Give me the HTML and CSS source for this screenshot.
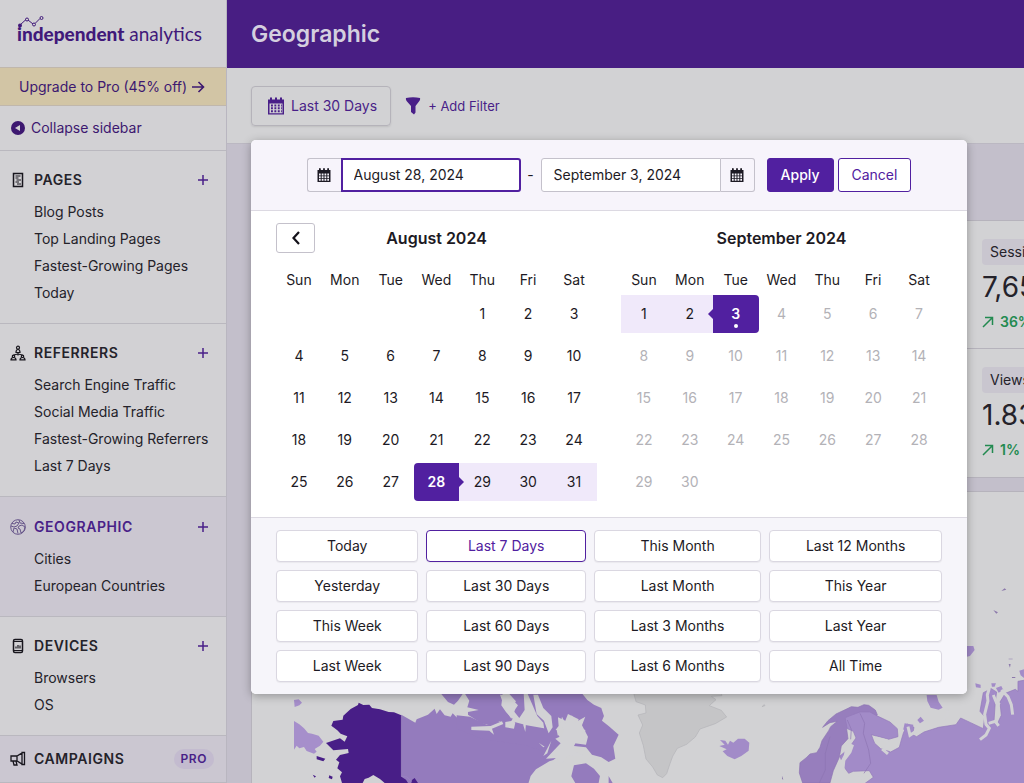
FILE: index.html
```html
<!DOCTYPE html>
<html lang="en">
<head>
<meta charset="utf-8">
<meta name="viewport" content="width=device-width, initial-scale=1">
<title>Geographic</title>
<link rel="stylesheet" href="styles.css">
</head>
<body>
<svg class="sprite" aria-hidden="true">
  <symbol id="calendar" viewBox="0 0 18 18">
    <path fill="currentColor" d="M1 2.5h2V1.2Q3 .2 4 .2t1 1v1.3h3V1.2q0-1 1-1t1 1v1.3h3V1.2q0-1 1-1t1 1v1.3h2V17.6H1zM2.5 6.500V16.200h13V6.500z"/>
    <path stroke="currentColor" stroke-width="1.900" stroke-dasharray="1.900 1.500" d="M4 8.500h11M4 11.300h11M4 14.200h11"/>
  </symbol>
  <symbol id="calendar-solid" viewBox="0 0 14 14">
    <path fill="currentColor" d="M.5 2H2V1q0-.9.9-.9t.9.900V2h2.300V1q0-.9.900-.9t.900.900V2h2.300V1q0-.9.900-.9t.900.900V2h1.500v12H.5z"/>
    <path fill="#f7f4fb" d="M2 5.500h1.700v2H2zM4.700 5.500h1.800v2H4.700zM7.500 5.500h1.800v2H7.500zM10.300 5.500H12v2h-1.700zM2 8.300h1.700v2H2zM4.700 8.300h1.800v2H4.700zM7.500 8.300h1.800v2H7.500zM10.300 8.300H12v2h-1.700zM2 11h1.700v1.800H2zM4.700 11h1.800v1.800H4.700zM7.500 11h1.800v1.800H7.500zM10.300 11H12v1.800h-1.700z"/>
  </symbol>
  <symbol id="plus" viewBox="0 0 12 12"><path d="M6 1v10M1 6h10" stroke="currentColor" stroke-width="1.500"/></symbol>
  <symbol id="up" viewBox="0 0 12 12"><path d="M1 11 10.500 1.500M3 1.500h7.500V9" fill="none" stroke="currentColor" stroke-width="1.500"/></symbol>
</svg>
<div class="app">
  <aside class="sidebar">
    <a class="logo" href="#"><b>independent</b> analytics
      <svg class="logo-mark" viewBox="0 0 28 12" aria-hidden="true"><path d="M2 9 8 3.500M10 4l5 4M17 7.500l5-5" stroke="#41197a" fill="none"/><circle cx="2" cy="9.500" r="2" fill="#41197a"/><g fill="none" stroke="#41197a"><circle cx="9" cy="3.500" r="1.500"/><circle cx="16" cy="8.500" r="1.500"/><circle cx="23.500" cy="2" r="1.500"/></g></svg>
    </a>
    <a class="upgrade" href="#">Upgrade to Pro (45% off)
      <svg width="14" height="12" viewBox="0 0 14 12" aria-hidden="true"><path d="M1 6h11.500M7.500 1l5 5-5 5" fill="none" stroke="currentColor" stroke-width="1.600"/></svg>
    </a>
    <button class="collapse" type="button">
      <svg width="14" height="14" viewBox="0 0 14 14" aria-hidden="true"><circle cx="7" cy="7" r="7" fill="currentColor"/><path d="M9 4v6L4 7z" fill="#d2d1d4"/></svg>
      Collapse sidebar
    </button>
    <nav>
      <section class="group">
        <h2><svg class="icon" viewBox="0 0 16 16" aria-hidden="true"><path d="M3.500 1.500h9v13h-9z" fill="none" stroke="currentColor" stroke-width="1.500"/><path d="M5.500 4h5M5.500 6h3M6.500 8H11M5.500 10H9M7 12h4" stroke="currentColor" stroke-width="1.200"/></svg>PAGES<button type="button" aria-label="Add pages report"><svg><use href="#plus"/></svg></button></h2>
        <ul><li><a href="#">Blog Posts</a></li><li><a href="#">Top Landing Pages</a></li><li><a href="#">Fastest-Growing Pages</a></li><li><a href="#">Today</a></li></ul>
      </section>
      <section class="group">
        <h2><svg class="icon" viewBox="0 0 16 16" aria-hidden="true"><g fill="none" stroke="currentColor" stroke-width="1.200"><circle cx="8" cy="2.700" r="1.500"/><path d="M6 7.500q0-3 2-3t2 3zM8 7.500v3M8 9 3.500 10M8 9l4.500 1"/><circle cx="3.500" cy="11.300" r="1.200"/><circle cx="12.500" cy="11.300" r="1.200"/><path d="M1 14.800q0-2.300 2.500-2.300T6 14.800zM10 14.800q0-2.300 2.500-2.300t2.500 2.300z"/></g></svg>REFERRERS<button type="button" aria-label="Add referrers report"><svg><use href="#plus"/></svg></button></h2>
        <ul><li><a href="#">Search Engine Traffic</a></li><li><a href="#">Social Media Traffic</a></li><li><a href="#">Fastest-Growing Referrers</a></li><li><a href="#">Last 7 Days</a></li></ul>
      </section>
      <section class="group active">
        <h2><svg class="icon" viewBox="0 0 16 16" aria-hidden="true"><g fill="none" stroke="#67568a" stroke-width="1"><circle cx="8" cy="8" r="7.300"/><path d="M2 4.500 5 5l1-2 3 1-2 3-3 1-3-1M3 13l1-4 3 1 1 4.500M9 1l1 3 4 .5M9 7l3-1 3 2-1 4-3 2-1-4-2-1z"/></g></svg>GEOGRAPHIC<button type="button" aria-label="Add geographic report"><svg><use href="#plus"/></svg></button></h2>
        <ul><li><a href="#">Cities</a></li><li><a href="#">European Countries</a></li></ul>
      </section>
      <section class="group">
        <h2><svg class="icon" viewBox="0 0 16 16" aria-hidden="true"><rect x="3.500" y="1.500" width="9" height="13" rx="1.500" fill="none" stroke="currentColor" stroke-width="1.500"/><path d="M4 3.500h8M4 12.500h8M6 10.500v-2M8 10.500V7M10 10.500v-3" stroke="currentColor" stroke-width="1.200"/></svg>DEVICES<button type="button" aria-label="Add devices report"><svg><use href="#plus"/></svg></button></h2>
        <ul><li><a href="#">Browsers</a></li><li><a href="#">OS</a></li></ul>
      </section>
      <section class="group locked">
        <h2><svg class="icon" viewBox="0 0 16 16" aria-hidden="true"><path d="M1 5h6l5-3v11L7 10H1zM7 5v5M3 10l1 4h3l-1-4M12 1.500h2.500v12H12z" fill="none" stroke="currentColor" stroke-width="1.300"/></svg>CAMPAIGNS<span class="pro">PRO</span></h2>
      </section>
    </nav>
  </aside>
  <main>
    <header class="title"><h1>Geographic</h1></header>
    <div class="toolbar">
      <button class="range" type="button"><svg width="18" height="18" aria-hidden="true"><use href="#calendar"/></svg>Last 30 Days</button>
      <button class="filter" type="button"><svg width="16" height="18" viewBox="0 0 16 18" aria-hidden="true"><path d="M1 1q7-1.500 14 0 .5 2-1 3.500L10.500 9v6.500L9 17.500 6 15V9L2 4.500Q.500 3 1 1z" fill="currentColor"/></svg>+ Add Filter</button>
      <div class="picker" role="dialog" aria-label="Date range">
        <form class="dates">
          <div class="field"><label for="from" aria-label="Start date"><svg width="14" height="14"><use href="#calendar-solid"/></svg></label><input id="from" class="focused" type="text" value="August 28, 2024"></div>
          <span class="dash">-</span>
          <div class="field end"><input id="to" type="text" value="September 3, 2024"><label for="to" aria-label="End date"><svg width="14" height="14"><use href="#calendar-solid"/></svg></label></div>
          <button class="apply" type="button">Apply</button>
          <button class="cancel" type="button">Cancel</button>
        </form>
        <div class="months">
          <button class="prev" type="button" aria-label="Previous month"><svg width="10" height="14" viewBox="0 0 10 14" aria-hidden="true"><path d="M8 1 2.500 7 8 13" fill="none" stroke="#14121a" stroke-width="2.200"/></svg></button>
          <table>
            <caption>August 2024</caption>
            <thead><tr><th>Sun</th><th>Mon</th><th>Tue</th><th>Wed</th><th>Thu</th><th>Fri</th><th>Sat</th></tr></thead>
            <tbody>
              <tr><td></td><td></td><td></td><td></td><td>1</td><td>2</td><td>3</td></tr>
              <tr><td>4</td><td>5</td><td>6</td><td>7</td><td>8</td><td>9</td><td>10</td></tr>
              <tr><td>11</td><td>12</td><td>13</td><td>14</td><td>15</td><td>16</td><td>17</td></tr>
              <tr><td>18</td><td>19</td><td>20</td><td>21</td><td>22</td><td>23</td><td>24</td></tr>
              <tr><td>25</td><td>26</td><td>27</td><td class="edge first">28</td><td class="between">29</td><td class="between">30</td><td class="between">31</td></tr>
            </tbody>
          </table>
          <table>
            <caption>September 2024</caption>
            <thead><tr><th>Sun</th><th>Mon</th><th>Tue</th><th>Wed</th><th>Thu</th><th>Fri</th><th>Sat</th></tr></thead>
            <tbody class="future">
              <tr><td class="between">1</td><td class="between">2</td><td class="edge last today">3</td><td>4</td><td>5</td><td>6</td><td>7</td></tr>
              <tr><td>8</td><td>9</td><td>10</td><td>11</td><td>12</td><td>13</td><td>14</td></tr>
              <tr><td>15</td><td>16</td><td>17</td><td>18</td><td>19</td><td>20</td><td>21</td></tr>
              <tr><td>22</td><td>23</td><td>24</td><td>25</td><td>26</td><td>27</td><td>28</td></tr>
              <tr><td>29</td><td>30</td><td></td><td></td><td></td><td></td><td></td></tr>
            </tbody>
          </table>
        </div>
        <div class="presets">
          <button type="button">Today</button><button type="button" class="selected">Last 7 Days</button><button type="button">This Month</button><button type="button">Last 12 Months</button>
          <button type="button">Yesterday</button><button type="button">Last 30 Days</button><button type="button">Last Month</button><button type="button">This Year</button>
          <button type="button">This Week</button><button type="button">Last 60 Days</button><button type="button">Last 3 Months</button><button type="button">Last Year</button>
          <button type="button">Last Week</button><button type="button">Last 90 Days</button><button type="button">Last 6 Months</button><button type="button">All Time</button>
        </div>
      </div>
    </div>
    <div class="content">
      <div class="stats">
        <div class="stat"><span class="chip">Sessions</span><strong>7,65</strong><span class="change"><svg width="12" height="12"><use href="#up"/></svg>36%</span></div>
        <div class="stat"><span class="chip">Views</span><strong>1.83</strong><span class="change"><svg width="12" height="12"><use href="#up"/></svg>1%</span></div>
      </div>
      <div class="map">
        <svg viewBox="252 492 772 291" aria-label="World map" role="img">
          <g transform="translate(270 690) scale(.3333)">
            <path fill="#a68fcb" d="M72 30l14-2 10 10-8 8-14 5zM72 93l16 10 14 12 12 14 12 2 20 6 14 18-10 12-16 10 6 8-8 6-22-8-8-12-14 4-8-8-8 12z"/>
            <path fill="#947bbd" d="M394 74l42 24 4-10 34-14 20-18 6 16 10-14 14 18 18 4 6-10 14 14 44 2 6 14-8 12 6 10 36-8 38 2 20-6 24 14 26-2 14-10 4 24 22-12 14 20 14-6 10 18 18-14 16-6 8 14 12 18-8 20-28 22-12 4-40 24-16 20-12 40H394z"/>
            <path fill="#947bbd" d="M514 12h64l-14 20-12 12-18-8zM572 -10h122l4 26-4 30 14 20 20 20-8 14-32-6-18 14-36-8-40-26 0-8 32-6-34-8 6-20zM700 -10h60l4 70-16 24-24-30 14-20-22-24zM768 0h160l24 30 20 14 22 10 8 24-6 14 20 16 30 26-16 34 6 38-20 10-22-14-28-8-18-22-36-4 6-12 26-12 2-24-26-8 6-24-32-16-8 20-22-10 2 26-16 20-12-6 4 34-18-32-4-26-18-20z"/>
            <path fill="#947bbd" d="M560 76l40 4 50 24 60-14 60 16 60 10 30 4 6 30-40 36-60-20-130-20-76-30z"/>
            <path fill="#947bbd" d="M912 226l36-6 24 16 18 22-4 21h-70l-12-20zM1016 258l12 21h-12z"/>
            <path fill="#d2d2d5" d="M690 14l18 50 16 22 12-28 8-12-30-30zM790 14h14l16 40 24 24 4 34-12 18-14-38-22-20zM706 96l24-4 6 6-4 18-26-4zM604 110l58-2 34-14 4 8-34 14 6 18-14-12-54-2zM762 80l6 20-2 26-6-20zM876 80l10 20 20-24 8 22 32-18-10 26 18 34-6 24-34-4-6 20 42 22-58-6-14 24-18-16-32 2 44-46-16-14 18-8 8-16-10-20zM844 152l-12 38-12 8zM806 158l18 12-4 2z"/>
            <path fill="#481e87" d="M266 38l14 7 18-1 8 10 24 4 26 8 16 1 22 9v184l14 9 6 10h-70l-14-12-20-12-14 8-12 4-6 12h-62l-6-20 6-12-14-12 6-18-10-8 12-14 26-6-2-12-44 4-22-22 42-14 14 10 8-16-20-8-10-10-18-14 6-14 28-4 2-12 22-20 22-12zM140 198l26 8-6 8-20-6zM128 254l10 5-4 4zM178 256l10 4-2 8-10-4zM426 270l8-6 10 15h-20z"/>
            <path fill="none" stroke="#a68fcb" d="M394 75v184l16 2 16 14"/>
          </g>
          <g transform="translate(630 580) scale(.3333)">
            <path fill="#c5c5c7" stroke="#b4b4b8" stroke-width="2" d="M10 335l8 30 28 10 2 24-24 6 14 30-10 24 12 38 8 40 20 24 14 24 16 8 12-12 10-30 8-22 14-24 28-12 26-22 14-24 46-16 34-20-16-20-36-14 20-18-14-10 32-2-4-12zM396 380l7-6 2 3z"/>
            <path fill="#a28bc8" d="M270 480l16 2 8 12 6-12 10 6 14-12 20 0 14 12-2 24-22 16-20 10-22-10-14-14 12-6-22-10 16-4z"/>
            <path fill="#977ebd" stroke="#8c74b2" stroke-width="2" d="M510 548l18-14 12-12 20-4 10-16 6-20 20-30 6-12 20-16-22 4-22 14 16-20 24-20 30-14 16-8 20 2 18-8 14 2 20 14 6 14-8 12-24-8-20 6-22 2-8 22-10 8 4 30-20 22-6 34-18 40-10 37h-82l-10-30z"/>
            <path fill="#a28bc8" stroke="#9279b9" stroke-width="2" d="M648 412l42-16 30 0 18 10 42 20 22 20 2 24-28 8-52-14 10 26 18 16 30 10 26-14 6-22 6-20 12-28 20 10-4 22 12 6 22-14 44-14 52-8 14-20 30 14 38 18 4-36-14-16 10-56 24-12 16 10-4 30-4 60 8 10 14-30-4-40 16-26 30-12 8 6 0-30 56-10v320H700l30-22-12-20-48 2-14 6-16-22-10-30 24-20 24-34-8-20-18-8-6-30z"/>
            <path fill="#a28bc8" d="M890 345h30l6 20 12 18-12 6-24-6-10-20zM862 420l10-10 10 12-12 8zM824 430l26 4-2 18-16 14-12-18zM1010 198l20 0 4 12-14 18-10 2zM1168 272l14-4v26l-10-8zM1036 310l16 4 0 10-14-2zM1084 310l14 0-4 10h-8zM1098 324l16-6 6 12-14 8z"/>
            <path fill="#8c79ab" d="M1114 33l10-8 5 4zM1090 90l14 7-5 4zM1136 236h12v2h-12zM1136 252h6l-2 11zM1146 291h10v3h-10zM456 587l4 12-4-2z"/>
            <path fill="none" stroke="#d2d2d5" stroke-width="9" d="M1078 325l-6 20 2 18-10 40 4 30 10 12-10 20-18 14M1076 430l20-6 10 14M1090 345l10 24 10 4M1114 330l20 20 10 24 4 30M738 474l32 8 6 14-16 14 14 12M834 440l6 26 20-14M954 392l-4 16-14 14"/>
            <path fill="#d2d2d5" d="M646 498l14-8 12 6-8 22-18 24-4 40 10 14 44-8 10 4-26 20h-68l10-50 20-38z"/>
            <path fill="none" stroke="#8c74b2" stroke-width="2" d="M652 420l12 28-2 30M690 400l14 30-4 30 16 50 6 40-20 30M600 470l-14 50 0 50-18 39"/>
          </g>
        </svg>
      </div>
    </div>
  </main>
</div>
</body>
</html>
```

FILE: styles.css
```css
* { box-sizing: border-box; }
body { margin: 0; font: 14px/20px Inter, "Liberation Sans", sans-serif; color: #24222a; background: #c3bfcb; }
button, input { font: inherit; color: inherit; margin: 0; }
button { cursor: pointer; }
a { color: inherit; text-decoration: none; }
h1, h2, ul { margin: 0; padding: 0; }
ul { list-style: none; }
.sprite { display: none; }
.app { display: flex; min-height: 100vh; overflow: hidden; }

.sidebar { flex: 0 0 227px; background: #d2d1d4; border-right: 1px solid #b9b6c0; }
.logo { position: relative; display: block; height: 67px; padding: 20px 0 0 17px; font: 400 19px/28px Lato, sans-serif; color: #41197a; white-space: nowrap; }
.logo b { font-weight: 900; }
.logo-mark { position: absolute; left: 18px; top: 16px; width: 28px; height: 12px; }
.upgrade { display: flex; align-items: center; gap: 4px; height: 39px; padding-left: 19px; background: #d2c5a5; border: solid #c0b7ac; border-width: 1px 0; color: #3d1870; }
.collapse { display: flex; align-items: center; gap: 6px; width: 100%; height: 45px; padding: 0 0 0 11px; border: 0; border-bottom: 1px solid #bab8bf; background: none; color: #3d1870; }
.group { padding: 11px 0 17px; border-bottom: 1px solid #bab8bf; }
.group h2 { display: flex; align-items: center; height: 36px; padding: 0 16px 0 10px; font-size: 14px; font-weight: 600; letter-spacing: 0.04em; }
.icon { width: 16px; height: 16px; margin-right: 8px; color: #18161d; }
.group button { display: flex; margin-left: auto; padding: 1px; border: 0; background: none; color: #491f88; }
.group button svg { width: 12px; height: 12px; }
.group a { display: block; padding-left: 34px; line-height: 27px; }
.active, .locked { background: #cbc7d1; }
.group.active { padding-top: 12px; }
.active h2 { color: #491f88; }
.group.locked { padding: 5px 0; }
.locked h2 { padding-right: 12px; }
.pro { margin-left: auto; padding: 0 7px; border-radius: 10px; background: #c3bbcf; color: #491f88; font-size: 12px; }

main { flex: 1; min-width: 0; }
.title { display: flex; align-items: center; height: 68px; padding: 0 24px; background: #481e83; color: #d4cfdf; }
.title h1 { font-size: 23px; font-weight: 600; line-height: 32px; }
.toolbar { position: relative; display: flex; align-items: center; gap: 14px; height: 76px; padding: 0 24px; background: #d2d2d4; border-bottom: 1px solid #bbb8c2; color: #491f88; }
.range { display: flex; align-items: center; gap: 6px; height: 40px; padding: 0 13px 0 15px; border: 1px solid #b5b3ba; border-radius: 4px; background: none; box-shadow: 0 1px 2px #00000018; }
.filter { display: flex; align-items: center; gap: 7px; padding: 0; border: 0; background: none; font-size: 13px; }

.picker { position: absolute; z-index: 2; left: 24px; top: 72px; width: 716px; overflow: hidden; border-radius: 5px; background: #fff; color: #1d1a24; box-shadow: 0 2px 10px #0000004d; }
.dates { display: flex; align-items: center; justify-content: center; height: 71px; background: #f7f4fb; border-bottom: 1px solid #dcd9e2; }
.field { display: flex; height: 34px; }
.field label { display: flex; align-items: center; justify-content: center; width: 34px; border: 1px solid #c4c1cb; border-right: 0; border-radius: 3px 0 0 3px; }
.field input { width: 180px; padding: 0 12px; border: 1px solid #c4c1cb; border-radius: 3px 0 0 3px; background: #fff; outline: 0; }
.field input.focused { border: 2px solid #5120a0; border-radius: 0 3px 3px 0; padding: 0 11px; }
.field.end label { border: 1px solid #c4c1cb; border-left: 0; border-radius: 0 3px 3px 0; }
.dash { width: 20px; text-align: center; }
.dates button { height: 34px; padding: 0 13px; border: 1px solid #5120a0; border-radius: 3px; }
.dates .apply { margin: 0 4px 0 12px; background: #5120a0; color: #fff; font-weight: 500; }
.dates .cancel { background: #fff; color: #5120a0; }

.months { position: relative; display: grid; grid-template-columns: 1fr 1fr; gap: 24px; padding: 12px 25px; }
.prev { position: absolute; left: 25px; top: 12px; display: flex; align-items: center; justify-content: center; width: 39px; height: 30px; padding: 0; border: 1px solid #c4c1cb; border-radius: 3px; background: #fff; }
table { width: 100%; table-layout: fixed; border-collapse: separate; border-spacing: 0 4px; text-align: center; }
caption { height: 30px; font-size: 16px; font-weight: 600; line-height: 30px; }
th { height: 34px; padding: 11px 0 0; font-weight: 400; line-height: 20px; }
td { position: relative; height: 38px; padding: 0; }
.future td { color: #b3b2b7; }
.future td.between, td.between { background: #f0e9fa; color: #1d1a24; }
td.edge { background: #5120a0; color: #fff; font-weight: 600; }
.first { border-radius: 4px 0 0 4px; }
.last { border-radius: 0 4px 4px 0; }
.future td.edge { color: #fff; }
.edge::before { content: ""; position: absolute; z-index: 1; top: 14px; border: 5px solid transparent; }
.first::before { left: 100%; border-left-color: #5120a0; border-right: 0; }
.last::before { right: 100%; border-right-color: #5120a0; border-left: 0; }
.today::after { content: ""; position: absolute; left: 50%; bottom: 5px; width: 4px; height: 4px; margin-left: -2px; border-radius: 50%; background: #fff; }

.presets { display: grid; grid-template-columns: repeat(4, auto); gap: 8px; padding: 12px 25px; background: #f6f5fa; border-top: 1px solid #dcd9e2; }
.presets button { height: 32px; padding: 0 8px; border: 1px solid #dad7e1; border-radius: 4px; background: #fff; box-shadow: 0 1px 1px #0000000d; }
.presets .selected { border-color: #5120a0; color: #5120a0; }

.content { padding: 76px 0 0 24px; }
.stats { display: flex; flex-direction: column; align-items: flex-end; border: 1px solid #b6b3bc; border-right: 0; background: #d2d2d4; }
.stat { display: flex; flex-direction: column; align-items: flex-start; width: 57px; height: 128px; padding: 18px 0 0 15px; overflow: hidden; border-bottom: 1px solid #b6b3bc; white-space: nowrap; }
.stat:last-child { border-bottom: 0; }
.chip { padding: 3px 8px; border-radius: 4px; background: #c9c6cf; }
.stat strong { margin-top: 4px; font-size: 28px; font-weight: 400; line-height: 36px; }
.change { display: flex; align-items: center; gap: 6px; margin-top: 7px; color: #238a50; font-weight: 600; }
.map { margin-top: 13px; border: solid #b6b3bc; border-width: 1px 0 0 1px; background: #d2d2d4; }
.map svg { display: block; width: 100%; }
```
